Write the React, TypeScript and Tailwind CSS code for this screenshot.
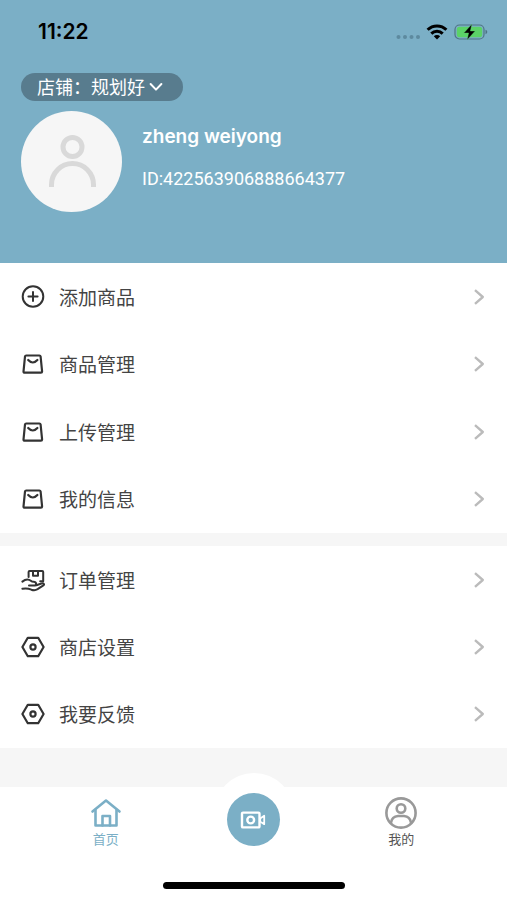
import type { ReactNode } from 'react'

interface MenuItem {
  label: string
  icon: ReactNode
}

function PlusCircleIcon() {
  return (
    <svg className="size-6" viewBox="0 0 24 24" fill="none" stroke="currentColor" strokeWidth="2" strokeLinecap="round">
      <circle cx="12" cy="11.5" r="10.3" />
      <path d="M12 6.9v9.2M7.4 11.5h9.2" />
    </svg>
  )
}

function BagIcon() {
  return (
    <svg className="size-6" viewBox="0 0 24 24" fill="none" stroke="currentColor" strokeWidth="2.2" strokeLinecap="round" strokeLinejoin="round">
      <path d="M5.2 3.5h13.2q1 0 1.2 1l1.5 15q0 1.2-1.2 1.2H3.700q-1.200 0-1.200-1.200L4 4.500q.2-1 1.200-1z" />
      <path d="M7.200 8q4.600 5 9.200 0" />
    </svg>
  )
}

function HandBoxIcon() {
  return (
    <svg className="size-6" viewBox="0 0 24 24" fill="none" stroke="currentColor" strokeWidth="2" strokeLinecap="round" strokeLinejoin="round">
      <path d="M7.6 9V4q0-1 1-1h12.600q1 0 1 1v9.200h-3" />
      <path d="M12 3.200v4.600h5V3.200" />
      <path d="M1.400 13.600c3-2.400 6.200-2.600 8.800-.6.600.6 1.400.8 2.400.8 3 0 3.400 3.800.6 3.800H8" />
      <path d="M15.400 17.200l5-1.700c2.600-.6 3.400 1 1.600 2.200l-5.400 3.500c-2 1.200-4.200 1.200-6.200.5-2.800-1.200-5.800-1.600-9-.9" />
    </svg>
  )
}

function HexagonIcon() {
  return (
    <svg className="size-6" viewBox="0 0 24 24" fill="none" stroke="currentColor" strokeWidth="2.2" strokeLinejoin="round">
      <path d="M6.800 2.800h10.400L22.600 12l-5.400 9.200H6.800L1.400 12z" />
      <circle cx="12" cy="12" r="2.600" />
    </svg>
  )
}

function ChevronRight() {
  return (
    <svg className="h-4 w-3" viewBox="0 0 12 16" fill="none" stroke="currentColor" strokeWidth="2.4" strokeLinejoin="round">
      <path d="M2 1.200L9.800 8L2 14.800" />
    </svg>
  )
}

const PRODUCT_ITEMS: MenuItem[] = [
  { label: '添加商品', icon: <PlusCircleIcon /> },
  { label: '商品管理', icon: <BagIcon /> },
  { label: '上传管理', icon: <BagIcon /> },
  { label: '我的信息', icon: <BagIcon /> },
]

const STORE_ITEMS: MenuItem[] = [
  { label: '订单管理', icon: <HandBoxIcon /> },
  { label: '商店设置', icon: <HexagonIcon /> },
  { label: '我要反馈', icon: <HexagonIcon /> },
]

function MenuList({ items, className }: { items: MenuItem[]; className: string }) {
  return (
    <ul className={`grid auto-rows-fr bg-white ${className}`}>
      {items.map(({ label, icon }) => (
        <li key={label} className="flex">
          <button type="button" className="flex flex-1 items-center pr-[22px] pl-[21px] text-[#333]">
            {icon}
            <span className="ml-3.5 flex-1 pt-1 text-left text-[19px] leading-7 text-[#444]">{label}</span>
            <span className="text-[#bbb]">
              <ChevronRight />
            </span>
          </button>
        </li>
      ))}
    </ul>
  )
}

function StatusBar() {
  return (
    <div className="flex h-16 items-center justify-between pr-[19px] pl-[38px] text-black">
      <span className="text-[21px] leading-6 font-semibold">11:22</span>
      <div className="flex items-center">
        <svg className="mt-2.5 h-1.5 w-6" viewBox="0 0 24 6" fill="#5d8a9f">
          <circle cx="2.5" cy="3" r="2" />
          <circle cx="9" cy="3" r="2" />
          <circle cx="15.5" cy="3" r="2" />
          <circle cx="22" cy="3" r="2" />
        </svg>
        <svg className="ml-1.5 h-4 w-[22px]" viewBox="0 0 22 16" fill="none" stroke="currentColor" strokeWidth="3">
          <path d="M1.600 5.800a13.400 13.400 0 0 1 18.800 0" />
          <path d="M5.300 9.600a8.200 8.200 0 0 1 11.400 0" />
          <path d="M11 15.600l-3.200-3.400a4.600 4.600 0 0 1 6.400 0z" fill="currentColor" stroke="none" />
        </svg>
        <svg className="ml-1.5 h-[18px] w-[34px]" viewBox="0 0 34 18">
          <rect x="1" y="2" width="29" height="14" rx="4.5" fill="none" stroke="#4f7383" strokeWidth="1.2" />
          <rect x="2.8" y="3.8" width="25.4" height="10.4" rx="2.8" fill="#5bd267" />
          <path d="M31.500 6.800q1.800.6 1.800 2.200t-1.800 2.200z" fill="#4f7383" />
          <path d="M17.800 1.200L9.800 10h4.800l-1.400 6.800L21.200 8h-4.800z" fill="#000" stroke="#5bd267" strokeWidth=".4" />
        </svg>
      </div>
    </div>
  )
}

export default function App() {
  return (
    <div className="flex min-h-screen flex-col bg-[#f6f6f6] font-['Inter','Noto_Sans_CJK_SC',sans-serif]">
      <header className="bg-[#7bafc6] pb-[51px] text-white">
        <StatusBar />
        <div className="px-[21px] pt-[9px]">
          <button type="button" className="flex h-7 items-center rounded-full bg-[#587c8e] pr-5 pl-4">
            <span className="pt-0.5 text-[18px] leading-7">店铺：规划好</span>
            <svg className="ml-1 h-3 w-3.5" viewBox="0 0 14 12" fill="none" stroke="currentColor" strokeWidth="2" strokeLinecap="round" strokeLinejoin="round">
              <path d="M1.600 3L7 8.600L12.400 3" />
            </svg>
          </button>
          <div className="mt-2.5 flex gap-5">
            <div className="size-[101px] shrink-0 rounded-full bg-[#f6f6f6]">
              <svg viewBox="0 0 101 101" fill="none" stroke="#d9d9d9" strokeWidth="5">
                <circle cx="51.5" cy="36" r="9.5" />
                <path d="M30.500 76v-2.500a21 21 0 0 1 42 0V76" />
              </svg>
            </div>
            <div className="min-w-0">
              <h1 className="pt-3 text-[19px] leading-7 font-semibold">zheng weiyong</h1>
              <p className="mt-4 font-['Roboto',sans-serif] text-[18px] leading-6">ID:422563906888664377</p>
            </div>
          </div>
        </div>
      </header>

      <main className="flex-1 space-y-[13px]">
        <MenuList items={PRODUCT_ITEMS} className="min-h-[270px]" />
        <MenuList items={STORE_ITEMS} className="min-h-[202px]" />
      </main>

      <nav className="relative bg-white pt-2.5 pb-[11px]">
        {/* raised backdrop behind the record button */}
        <span className="absolute -top-3.5 left-1/2 size-20 -translate-x-1/2 rounded-full bg-white" />
        <div className="relative grid grid-cols-3 px-8">
          <a href="#home" className="flex flex-col items-center text-[#7bafc6]">
            <svg className="size-8" viewBox="0 0 32 32" fill="none" stroke="currentColor" strokeWidth="2.6" strokeLinecap="round" strokeLinejoin="round">
              <path d="M2.500 14.500L16 3.500L29.500 14.500" />
              <path d="M5.500 13v15.500h21V13" />
              <path d="M12.500 28.500V19h7.500v9.500" />
            </svg>
            <span className="text-[13px] leading-5">首页</span>
          </a>
          <button type="button" aria-label="录像" className="mt-[-4px] flex size-[53px] items-center justify-center justify-self-center rounded-full bg-[#7bafc6] text-white">
            <svg className="h-[18px] w-[26px]" viewBox="0 0 26 18" fill="none" stroke="currentColor" strokeWidth="2.4" strokeLinejoin="round">
              <rect x="2" y="1.600" width="17.500" height="14.800" rx="1" />
              <circle cx="10.700" cy="9" r="3.400" />
              <path d="M20.200 7.400l4-2.600v8.400l-4-2.600z" strokeWidth="1.800" />
            </svg>
          </button>
          <a href="#mine" className="flex flex-col items-center text-[#555]">
            <svg className="size-8 text-[#999]" viewBox="0 0 32 32" fill="none" stroke="currentColor" strokeWidth="2.6">
              <circle cx="16" cy="16" r="14.6" />
              <circle cx="16" cy="11.5" r="4.3" />
              <path d="M6 26.500v-1q1-6 7-6.500h6q6 .5 7 6.500v1" />
            </svg>
            <span className="text-[13px] leading-5">我的</span>
          </a>
        </div>
        <div className="mx-auto mt-[33px] h-[7px] w-[182px] rounded-full bg-black" />
      </nav>
    </div>
  )
}
